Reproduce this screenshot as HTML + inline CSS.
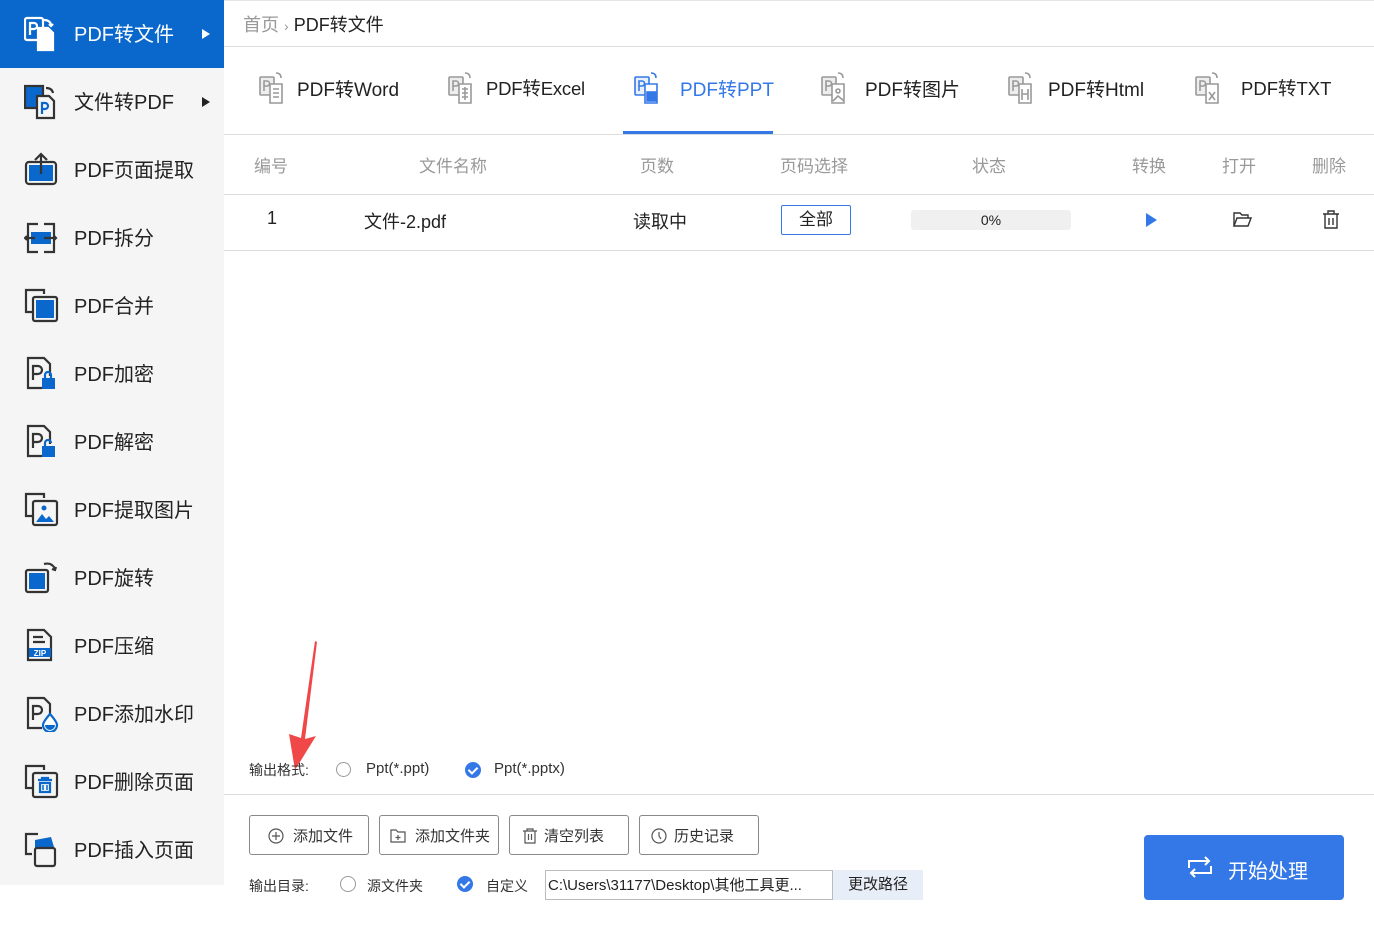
<!DOCTYPE html>
<html><head><meta charset="utf-8"><style>
*{margin:0;padding:0;box-sizing:border-box}
body{width:1374px;height:925px;background:#fff;font-family:"Liberation Sans","Noto Sans CJK SC",sans-serif;color:#222;position:relative;overflow:hidden}
.a{position:absolute;white-space:nowrap}
#side{position:absolute;left:0;top:0;width:224px;height:885px;background:#f5f5f5}
.it{position:absolute;left:0;width:224px;height:68px}
.it svg{position:absolute;left:24px;top:16px}
.it span{position:absolute;left:74px;top:21px;font-size:20px;line-height:28px;color:#222}
.act{background:#0a68cc}
.act span{color:#fff}
.tri{position:absolute;left:202px;top:29px;width:0;height:0;border-left:8px solid #222;border-top:5px solid transparent;border-bottom:5px solid transparent}
.tab{position:absolute;top:72px;height:36px}
.tab svg{position:absolute;left:0;top:0}
.tab span{position:absolute;left:38px;top:3px;font-size:19px;color:#222;white-space:nowrap}
.hl{position:absolute;left:224px;right:0;height:1px;background:#dcdcdc}
.th{position:absolute;top:152px;font-size:17px;color:#999;white-space:nowrap}
.btn{position:absolute;top:815px;height:40px;border:1px solid #888;border-radius:3px;font-size:15px;color:#333}
.btn svg{position:absolute;left:18px;top:12px}
.btn span{position:absolute;top:9px}
.rad{position:absolute;width:15px;height:15px;border-radius:50%;border:1px solid #999}
.chk{position:absolute;width:16px;height:16px;border-radius:50%;background:#3478e8}
.chk:after{content:"";position:absolute;left:5px;top:3px;width:4px;height:7px;border:solid #fff;border-width:0 2px 2px 0;transform:rotate(45deg)}
</style></head><body>
<div id="side">
 <div class="it act" style="top:0">
  <svg width="36" height="36" viewBox="0 0 36 36" fill="none" stroke="#fff" stroke-width="2.2"><rect x="1" y="2" width="18" height="22" rx="2"/><path d="M6 19V7h4a3 3 0 010 6H6"/><path d="M14 12h10l5 5v17H14z" fill="#fff"/><path d="M20 4q6 0 7 5m-2-1l2 2 2-2"/></svg>
  <span>PDF转文件</span><div class="tri" style="border-left-color:#fff"></div></div>
 <div class="it" style="top:68px">
  <svg width="36" height="36" viewBox="0 0 36 36" fill="none" stroke="#333" stroke-width="2.2"><rect x="1" y="2" width="18" height="22" fill="#0a68cc"/><path d="M13 12h12l5 5v17H13z" fill="#f5f5f5"/><path d="M18 30V19h3a3 3 0 010 6h-3" stroke="#0a68cc"/><path d="M22 4q6 0 7 5"/></svg>
  <span>文件转PDF</span><div class="tri"></div></div>
 <div class="it" style="top:136px">
  <svg width="36" height="36" viewBox="0 0 36 36" fill="none" stroke="#333" stroke-width="2.2"><rect x="2" y="10" width="30" height="22" rx="3"/><rect x="5" y="13" width="24" height="16" fill="#0a68cc" stroke="none"/><path d="M17 22V2m-6 6l6-6 6 6"/></svg>
  <span>PDF页面提取</span></div>
 <div class="it" style="top:204px">
  <svg width="36" height="36" viewBox="0 0 36 36" fill="none" stroke="#333" stroke-width="2.2"><path d="M14 4H4v28h10M20 4h10v28H20"/><rect x="7" y="12" width="20" height="12" fill="#0a68cc" stroke="none"/><path d="M1 18h10M20 18h12M3 16l-2 2 2 2M30 16l2 2-2 2"/></svg>
  <span>PDF拆分</span></div>
 <div class="it" style="top:272px">
  <svg width="36" height="36" viewBox="0 0 36 36" fill="none" stroke="#333" stroke-width="2.2"><path d="M20 6V2H2v22h6"/><rect x="9" y="9" width="24" height="24" rx="2"/><rect x="12" y="12" width="18" height="18" fill="#0a68cc" stroke="none"/></svg>
  <span>PDF合并</span></div>
 <div class="it" style="top:340px">
  <svg width="36" height="36" viewBox="0 0 36 36" fill="none" stroke="#333" stroke-width="2.2"><path d="M18 32H4V2h16l6 6v12"/><path d="M9 24V10h5a4 4 0 010 8H9"/><rect x="18" y="22" width="13" height="11" fill="#0a68cc" stroke="none"/><path d="M21 22v-3a3 3 0 016 0v3" stroke="#0a68cc"/></svg>
  <span>PDF加密</span></div>
 <div class="it" style="top:408px">
  <svg width="36" height="36" viewBox="0 0 36 36" fill="none" stroke="#333" stroke-width="2.2"><path d="M18 32H4V2h16l6 6v12"/><path d="M9 24V10h5a4 4 0 010 8H9"/><rect x="18" y="22" width="13" height="11" fill="#0a68cc" stroke="none"/><path d="M21 22v-3a3 3 0 016 0" stroke="#0a68cc"/></svg>
  <span>PDF解密</span></div>
 <div class="it" style="top:476px">
  <svg width="36" height="36" viewBox="0 0 36 36" fill="none" stroke="#333" stroke-width="2.2"><path d="M20 6V2H2v22h6"/><rect x="9" y="9" width="24" height="24" rx="2"/><path d="M12 30l6-8 4 5 3-3 5 6z" fill="#0a68cc" stroke="none"/><circle cx="20" cy="16" r="2.5" fill="#0a68cc" stroke="none"/></svg>
  <span>PDF提取图片</span></div>
 <div class="it" style="top:544px">
  <svg width="36" height="36" viewBox="0 0 36 36" fill="none" stroke="#333" stroke-width="2.2"><rect x="2" y="10" width="22" height="22" rx="2"/><rect x="5" y="13" width="16" height="16" fill="#0a68cc" stroke="none"/><path d="M20 4q8-2 11 5m-3 0l3 1 1-3"/></svg>
  <span>PDF旋转</span></div>
 <div class="it" style="top:612px">
  <svg width="36" height="36" viewBox="0 0 36 36" fill="none" stroke="#333" stroke-width="2.2"><path d="M4 32V2h16l7 7v23z"/><path d="M9 9h10M9 14h12"/><rect x="5" y="20" width="22" height="9" fill="#0a68cc" stroke="none"/><text x="16" y="28" font-size="8" fill="#fff" stroke="none" text-anchor="middle" font-family="Liberation Sans" font-weight="bold">ZIP</text></svg>
  <span>PDF压缩</span></div>
 <div class="it" style="top:680px">
  <svg width="36" height="36" viewBox="0 0 36 36" fill="none" stroke="#333" stroke-width="2.2"><path d="M18 32H4V2h16l6 6v10"/><path d="M9 24V10h5a4 4 0 010 8H9"/><path d="M26 18q-7 8-7 11a7 7 0 0014 0q0-3-7-11z" fill="#fff" stroke="#0a68cc"/><path d="M21 29a5 5 0 0010 0z" fill="#0a68cc" stroke="none"/></svg>
  <span>PDF添加水印</span></div>
 <div class="it" style="top:748px">
  <svg width="36" height="36" viewBox="0 0 36 36" fill="none" stroke="#333" stroke-width="2.2"><path d="M20 6V2H2v22h6"/><rect x="9" y="9" width="24" height="24" rx="2"/><path d="M14 16h14M18 16v-2h6v2M16 19h10v9H16z" stroke="#0a68cc"/><path d="M19 21v5M23 21v5" stroke="#0a68cc" stroke-width="1.5"/></svg>
  <span>PDF删除页面</span></div>
 <div class="it" style="top:816px">
  <svg width="36" height="36" viewBox="0 0 36 36" fill="none" stroke="#333" stroke-width="2.2"><path d="M14 2H2v20h6"/><path d="M11 8l16-3 3 10-19 3z" fill="#0a68cc" stroke="none"/><rect x="11" y="16" width="20" height="18" rx="2" fill="#f5f5f5"/></svg>
  <span>PDF插入页面</span></div>
</div>

<div class="hl" style="top:0;background:#e6e6e6"></div>
<div class="a" style="left:243px;top:11px;font-size:18px;color:#999">首页 <span style="font-size:14px">›</span> <span style="color:#222">PDF转文件</span></div>
<div class="hl" style="top:46px"></div>

<div class="tab" style="left:259px"><svg width="30" height="34" viewBox="0 0 30 34" fill="none" stroke="#999" stroke-width="1.6"><rect x="1" y="5" width="14" height="18" rx="1" fill="#eee"/><path d="M5 19V9h3a2.5 2.5 0 010 5H5"/><path d="M11 12h12v19H11z" fill="#fff"/><path d="M14 17h6M14 21h6M14 25h6"/><path d="M17 1q5 0 5 5"/></svg><span>PDF转Word</span></div>
<div class="tab" style="left:448px"><svg width="30" height="34" viewBox="0 0 30 34" fill="none" stroke="#999" stroke-width="1.6"><rect x="1" y="5" width="14" height="18" rx="1" fill="#eee"/><path d="M5 19V9h3a2.5 2.5 0 010 5H5"/><path d="M11 12h12v19H11z" fill="#fff"/><path d="M14 17h6M14 21h6M14 25h6M17 15v13"/><path d="M17 1q5 0 5 5"/></svg><span style="font-size:18.5px;letter-spacing:-0.2px">PDF转Excel</span></div>
<div class="tab" style="left:634px"><svg width="30" height="34" viewBox="0 0 30 34" fill="none" stroke="#3478e8" stroke-width="1.6"><rect x="1" y="5" width="14" height="18" rx="1" fill="#e8f0fc"/><path d="M5 19V9h3a2.5 2.5 0 010 5H5"/><path d="M11 12h12v19H11z" fill="#fff"/><rect x="13" y="20" width="9" height="9" fill="#3478e8"/><path d="M17 1q5 0 5 5"/></svg><span style="color:#3478e8;left:46px">PDF转PPT</span></div>
<div class="tab" style="left:821px"><svg width="30" height="34" viewBox="0 0 30 34" fill="none" stroke="#999" stroke-width="1.6"><rect x="1" y="5" width="14" height="18" rx="1" fill="#eee"/><path d="M5 19V9h3a2.5 2.5 0 010 5H5"/><path d="M11 12h12v19H11z" fill="#fff"/><circle cx="17" cy="19" r="2"/><path d="M12 29l5-5 6 5"/><path d="M17 1q5 0 5 5"/></svg><span style="left:44px">PDF转图片</span></div>
<div class="tab" style="left:1008px"><svg width="30" height="34" viewBox="0 0 30 34" fill="none" stroke="#999" stroke-width="1.6"><rect x="1" y="5" width="14" height="18" rx="1" fill="#eee"/><path d="M5 19V9h3a2.5 2.5 0 010 5H5"/><path d="M11 12h12v19H11z" fill="#fff"/><path d="M14 17v11M20 17v11M14 22h6"/><path d="M17 1q5 0 5 5"/></svg><span style="left:40px">PDF转Html</span></div>
<div class="tab" style="left:1195px"><svg width="30" height="34" viewBox="0 0 30 34" fill="none" stroke="#999" stroke-width="1.6"><rect x="1" y="5" width="14" height="18" rx="1" fill="#eee"/><path d="M5 19V9h3a2.5 2.5 0 010 5H5"/><path d="M11 12h12v19H11z" fill="#fff"/><path d="M14 20l6 8M20 20l-6 8"/><path d="M17 1q5 0 5 5"/></svg><span style="left:46px;font-size:18.5px">PDF转TXT</span></div>
<div class="a" style="left:623px;top:131px;width:150px;height:3px;background:#3478e8"></div>
<div class="hl" style="top:134px"></div>

<div class="th" style="left:254px">编号</div>
<div class="th" style="left:419px">文件名称</div>
<div class="th" style="left:640px">页数</div>
<div class="th" style="left:780px">页码选择</div>
<div class="th" style="left:972px">状态</div>
<div class="th" style="left:1132px">转换</div>
<div class="th" style="left:1222px">打开</div>
<div class="th" style="left:1312px">删除</div>
<div class="hl" style="top:194px"></div>

<div class="a" style="left:267px;top:208px;font-size:18px">1</div>
<div class="a" style="left:364px;top:208px;font-size:18px">文件-2.pdf</div>
<div class="a" style="left:633px;top:208px;font-size:18px">读取中</div>
<div class="a" style="left:781px;top:205px;width:70px;height:30px;border:1px solid #3478e8;border-radius:2px;font-size:17px;text-align:center;line-height:28px">全部</div>
<div class="a" style="left:911px;top:210px;width:160px;height:20px;background:#f0f0f0;border-radius:3px;font-size:14px;text-align:center;line-height:20px">0%</div>
<div class="a" style="left:1146px;top:213px;border-left:11px solid #3478e8;border-top:7px solid transparent;border-bottom:7px solid transparent"></div>
<svg class="a" style="left:1232px;top:211px" width="20" height="18" viewBox="0 0 20 18" fill="none" stroke="#333" stroke-width="1.4"><path d="M2 15V2h6l2 2h6v3"/><path d="M2 15l3-8h14l-3 8z"/></svg>
<svg class="a" style="left:1322px;top:210px" width="18" height="19" viewBox="0 0 18 19" fill="none" stroke="#333" stroke-width="1.4"><path d="M1 4h16M6 4V1h6v3M3 4v14h12V4M7 8v7M11 8v7"/></svg>
<div class="hl" style="top:250px"></div>

<svg class="a" style="left:280px;top:638px" width="40" height="135" viewBox="0 0 40 135"><polygon points="35,3 37,4 25,101 36,98 15,132 9,96 21,100" fill="#f04848"/></svg>

<div class="a" style="left:249px;top:760px;font-size:14px;color:#333">输出格式:</div>
<div class="rad" style="left:336px;top:762px"></div>
<div class="a" style="left:366px;top:760px;font-size:15px;color:#333">Ppt(*.ppt)</div>
<div class="chk" style="left:465px;top:762px"></div>
<div class="a" style="left:494px;top:760px;font-size:15px;color:#333">Ppt(*.pptx)</div>
<div class="hl" style="top:794px"></div>

<div class="btn" style="left:249px;width:120px"><svg width="16" height="16" viewBox="0 0 16 16" fill="none" stroke="#555" stroke-width="1.2"><circle cx="8" cy="8" r="7"/><path d="M8 4v8M4 8h8"/></svg><span style="left:43px">添加文件</span></div>
<div class="btn" style="left:379px;width:120px"><svg width="16" height="16" viewBox="0 0 16 16" fill="none" stroke="#555" stroke-width="1.2" style="left:10px"><path d="M1 14V2h5l2 2h7v10z"/><path d="M8 7v5M5.5 9.5h5"/></svg><span style="left:35px">添加文件夹</span></div>
<div class="btn" style="left:509px;width:120px"><svg width="16" height="16" viewBox="0 0 16 16" fill="none" stroke="#555" stroke-width="1.2" style="left:12px"><path d="M1 3h14M5 3V1h6v2M3 3v12h10V3M6.5 6v6M9.5 6v6"/></svg><span style="left:34px">清空列表</span></div>
<div class="btn" style="left:639px;width:120px"><svg width="16" height="16" viewBox="0 0 16 16" fill="none" stroke="#555" stroke-width="1.2" style="left:11px"><circle cx="8" cy="8" r="7"/><path d="M8 4v4l2 3"/></svg><span style="left:34px">历史记录</span></div>

<div class="a" style="left:249px;top:876px;font-size:14px;color:#333">输出目录:</div>
<div class="rad" style="left:340px;top:876px;width:16px;height:16px"></div>
<div class="a" style="left:367px;top:876px;font-size:14px;color:#333">源文件夹</div>
<div class="chk" style="left:457px;top:876px"></div>
<div class="a" style="left:486px;top:876px;font-size:14px;color:#333">自定义</div>
<div class="a" style="left:545px;top:870px;width:288px;height:30px;border:1px solid #bbb;font-size:15px;line-height:29px;padding-left:2px;color:#222">C:\Users\31177\Desktop\其他工具更...</div>
<div class="a" style="left:833px;top:870px;width:90px;height:30px;background:#e8eef8;font-size:15px;line-height:30px;text-align:center;color:#222">更改路径</div>

<div class="a" style="left:1144px;top:835px;width:200px;height:65px;background:#3478e8;border-radius:4px"></div>
<svg class="a" style="left:1187px;top:856px" width="26" height="22" viewBox="0 0 26 22" fill="none" stroke="#fff" stroke-width="2"><path d="M2 12V5h20M18 1l4 4-4 4M24 10v7H4M8 21l-4-4 4-4"/></svg>
<div class="a" style="left:1228px;top:855px;font-size:20px;color:#fff">开始处理</div>
</body></html>
